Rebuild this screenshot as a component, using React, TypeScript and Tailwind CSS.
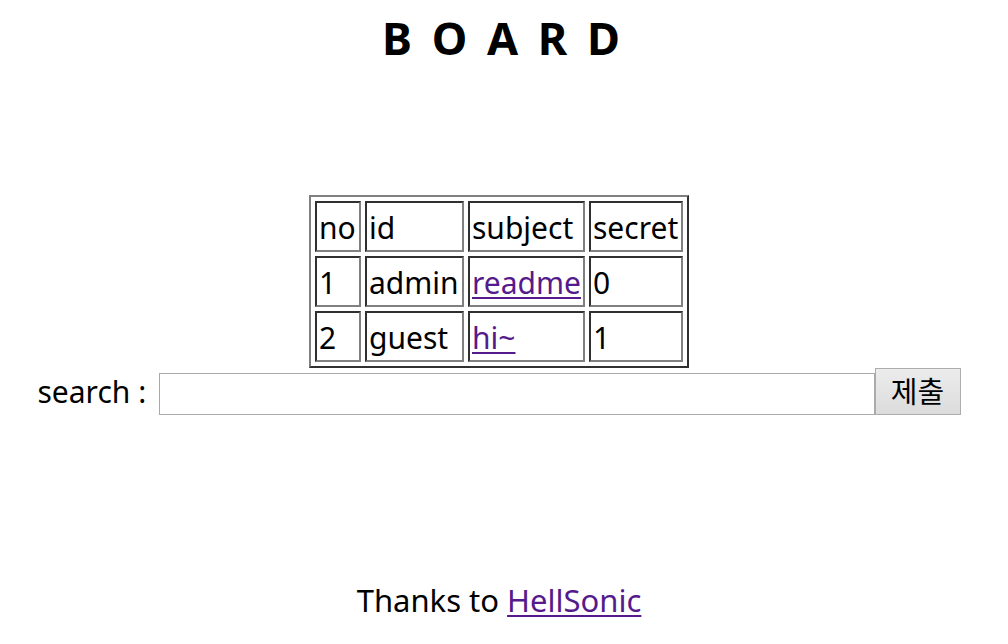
const rows = [
  { no: '1', id: 'admin', subject: 'readme', secret: '0' },
  { no: '2', id: 'guest', subject: 'hi~', secret: '1' },
]

const cell =
  'border-2 border-t-[#303030] border-l-[#303030] border-b-[#808080] border-r-[#808080] p-[2px] text-left align-top font-normal'

function Cell({ w, children, head }: { w: string; children: React.ReactNode; head?: boolean }) {
  const inner = (
    <div className={`${w} h-[43px] whitespace-nowrap pt-[3px] leading-[40px]`}>{children}</div>
  )
  return head ? <th className={cell}>{inner}</th> : <td className={cell}>{inner}</td>
}

export default function App() {
  return (
    <div
      className="min-h-[644px] bg-white pr-[10px] text-black"
      style={{ fontFamily: '"Noto Sans", "Noto Sans CJK KR", sans-serif' }}
    >
      <div className="flex flex-col items-center">
        <h1 className="pl-[8px] pt-[6px] text-[45px] font-bold leading-[64px] tracking-[4px]">B O A R D</h1>

        <table className="mt-[125px] border-separate border-spacing-[4px] border-2 border-t-[#808080] border-l-[#808080] border-b-[#303030] border-r-[#303030] text-[30px]">
          <thead>
            <tr>
              <Cell w="w-[38px]" head>no</Cell>
              <Cell w="w-[91px]" head>id</Cell>
              <Cell w="w-[109px]" head>subject</Cell>
              <Cell w="w-[86px]" head>secret</Cell>
            </tr>
          </thead>
          <tbody>
            {rows.map((r) => (
              <tr key={r.no}>
                <Cell w="w-[38px]">{r.no}</Cell>
                <Cell w="w-[91px]">{r.id}</Cell>
                <Cell w="w-[109px]">
                  <a href="#" className="text-[#551a8b] underline decoration-[2px] underline-offset-[3px]">
                    {r.subject}
                  </a>
                </Cell>
                <Cell w="w-[86px]">{r.secret}</Cell>
              </tr>
            ))}
          </tbody>
        </table>

        <form className="flex items-start text-[30px]" onSubmit={(e) => e.preventDefault()}>
          <label className="w-[121px] whitespace-nowrap leading-[47px]">search :</label>
          <input
            type="text"
            className="mt-[5px] h-[42px] w-[716px] border border-[#a9a9a9] bg-white px-1 outline-none"
          />
          <button
            type="submit"
            className="h-[47px] w-[86px] border border-[#adadad] bg-gradient-to-b from-[#ececec] to-[#dcdcdc] text-[29px] leading-[44px]"
          >
            제출
          </button>
        </form>

        <p className="mt-[165px] text-[31px] leading-[40px]">
          Thanks to{' '}
          <a href="#" className="text-[#551a8b] underline decoration-[2px] underline-offset-[3px]">
            HellSonic
          </a>
        </p>
      </div>
    </div>
  )
}
